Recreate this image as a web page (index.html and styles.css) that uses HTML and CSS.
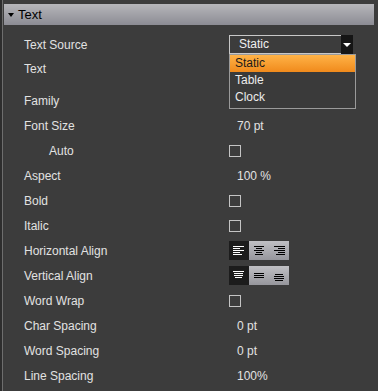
FILE: index.html
```html
<!DOCTYPE html>
<html lang="en">
<head>
    <meta charset="UTF-8">
    <title>Text Properties</title>
    <link rel="stylesheet" href="styles.css">
</head>
<body>
    <div class="panel">
        <!-- Section header -->
        <div class="section-header"><span class="caret"></span>Text</div>

        <div class="rows">
            <div class="row">
                <span class="label">Text Source</span>
                <div class="value">
                    <div class="select">
                        <span class="select-text">Static</span>
                        <span class="select-arrow"></span>
                    </div>
                    <!-- Open dropdown list -->
                    <ul class="dropdown">
                        <li class="active">Static</li>
                        <li>Table</li>
                        <li>Clock</li>
                    </ul>
                </div>
            </div>
            <div class="row row-tall">
                <span class="label">Text</span>
                <div class="value"></div>
            </div>
            <div class="row">
                <span class="label">Family</span>
                <div class="value"></div>
            </div>
            <div class="row">
                <span class="label">Font Size</span>
                <div class="value"><span class="num">70 pt</span></div>
            </div>
            <div class="row">
                <span class="label sub">Auto</span>
                <div class="value"><span class="checkbox"></span></div>
            </div>
            <div class="row">
                <span class="label">Aspect</span>
                <div class="value"><span class="num">100 %</span></div>
            </div>
            <div class="row">
                <span class="label">Bold</span>
                <div class="value"><span class="checkbox"></span></div>
            </div>
            <div class="row">
                <span class="label">Italic</span>
                <div class="value"><span class="checkbox"></span></div>
            </div>
            <div class="row">
                <span class="label">Horizontal Align</span>
                <div class="value">
                    <div class="seg">
                        <span class="seg-btn on">
                            <svg width="12" height="11" viewBox="0 0 12 11"><path d="M0 1.5h11M0 3.5h7M0 5.5h11M0 7.5h7M0 9.5h9" stroke="#fff" stroke-width="1"/></svg>
                        </span>
                        <span class="seg-btn">
                            <svg width="12" height="11" viewBox="0 0 12 11"><path d="M1 1.5h10M3 3.5h6M1 5.5h10M3 7.5h6M2 9.5h8" stroke="#000" stroke-width="1"/></svg>
                        </span>
                        <span class="seg-btn">
                            <svg width="12" height="11" viewBox="0 0 12 11"><path d="M1 1.5h11M5 3.5h7M1 5.5h11M5 7.5h7M3 9.5h9" stroke="#000" stroke-width="1"/></svg>
                        </span>
                    </div>
                </div>
            </div>
            <div class="row">
                <span class="label">Vertical Align</span>
                <div class="value">
                    <div class="seg">
                        <span class="seg-btn on">
                            <svg width="12" height="11" viewBox="0 0 12 11"><path d="M0 1.5h11M1 3.5h9M1 5.5h9M2 7.5h7" stroke="#fff" stroke-width="1"/></svg>
                        </span>
                        <span class="seg-btn">
                            <svg width="12" height="11" viewBox="0 0 12 11"><path d="M1 3.5h10M1 5.5h10M1 7.5h10" stroke="#000" stroke-width="1"/></svg>
                        </span>
                        <span class="seg-btn">
                            <svg width="12" height="11" viewBox="0 0 12 11"><path d="M2 4.5h8M1 6.5h10M1 8.5h10M2 10.5h8" stroke="#000" stroke-width="1"/></svg>
                        </span>
                    </div>
                </div>
            </div>
            <div class="row">
                <span class="label">Word Wrap</span>
                <div class="value"><span class="checkbox"></span></div>
            </div>
            <div class="row">
                <span class="label">Char Spacing</span>
                <div class="value"><span class="num">0 pt</span></div>
            </div>
            <div class="row">
                <span class="label">Word Spacing</span>
                <div class="value"><span class="num">0 pt</span></div>
            </div>
            <div class="row">
                <span class="label">Line Spacing</span>
                <div class="value"><span class="num">100%</span></div>
            </div>
        </div>
    </div>
</body>
</html>
```

FILE: styles.css
```css
body {
    margin: 0;
    padding: 0;
    background-color: #2e2e2e;
    font-family: "Liberation Sans", Arial, sans-serif;
    font-size: 12px;
    color: #e2e2e2;
    overflow: hidden;
}

.panel {
    margin-left: 2px;
    border-left: 1px solid #6e6e6e;
    background-color: #3c3c3c;
    min-height: 391px;
    padding-top: 4px;
}

/* Section header */
.section-header {
    display: flex;
    align-items: center;
    margin-left: 1px;
    width: 370px;
    height: 21px;
    background: linear-gradient(#b6b6ba, #8c8c94);
    color: #000;
    font-size: 13px;
    box-sizing: border-box;
    padding-left: 4px;
}

.caret {
    width: 0;
    height: 0;
    border-left: 3px solid transparent;
    border-right: 3px solid transparent;
    border-top: 4px solid #000;
    margin-right: 4px;
}

.rows {
    padding-top: 7px;
}

.row {
    display: flex;
    align-items: center;
    height: 25px;
}

.row-tall {
    height: 31px;
    align-items: flex-start;
    padding-top: 5px;
    box-sizing: border-box;
}

.label {
    width: 205px;
    padding-left: 21px;
    flex-shrink: 0;
}

.label.sub {
    width: 180px;
    padding-left: 46px;
}

.value {
    position: relative;
    display: flex;
    align-items: center;
}

.num {
    padding-left: 8px;
}

.checkbox {
    display: block;
    width: 10px;
    height: 10px;
    border: 1px solid #c4c4c4;
}

/* Combo box */
.select {
    display: flex;
    align-items: stretch;
    width: 124px;
    height: 19px;
    margin-top: -1px;
}

.select-text {
    flex: 1;
    border: 1px solid #c8c8c8;
    border-right: none;
    padding-left: 9px;
    line-height: 17px;
    color: #f0f0f0;
}

.select-arrow {
    width: 12px;
    background-color: #151515;
    position: relative;
}

.select-arrow::after {
    content: "";
    position: absolute;
    left: 2px;
    top: 8px;
    border-left: 4px solid transparent;
    border-right: 4px solid transparent;
    border-top: 4px solid #fff;
}

.dropdown {
    position: absolute;
    top: 18px;
    left: 0;
    width: 125px;
    margin: 0;
    padding: 0 0 2px 0;
    list-style: none;
    background-color: #3a3a3a;
    border: 1px solid #9a9a9a;
    z-index: 2;
}

.dropdown li {
    height: 17px;
    line-height: 17px;
    padding-left: 5px;
    color: #ececec;
}

.dropdown li.active {
    background: linear-gradient(#ffb347, #f08a1c);
    color: #1a1a1a;
}

/* Segmented align buttons */
.seg {
    display: flex;
}

.seg-btn {
    display: flex;
    align-items: center;
    justify-content: center;
    width: 20px;
    height: 19px;
    background: linear-gradient(#c0c0c4, #96969c);
}

.seg-btn.on {
    background: #1c1c1c;
}
```
